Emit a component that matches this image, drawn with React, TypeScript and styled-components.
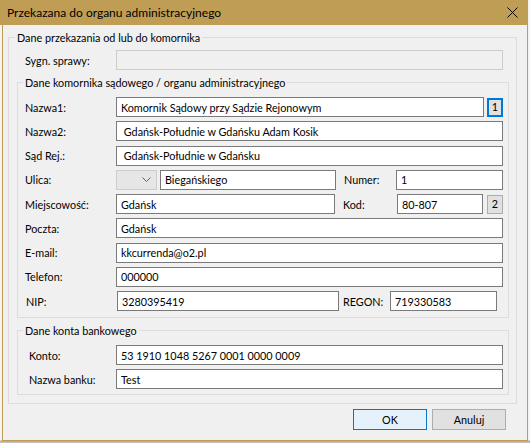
import React from 'react';
import styled, { createGlobalStyle } from 'styled-components';

const FONT = `"Lato", "Noto Sans", sans-serif`;

const Global = createGlobalStyle`
  html, body { margin: 0; padding: 0; }
  body { font-family: ${FONT}; font-size: 10.8px; color: #000; background: #ececec; }
`;

const Desktop = styled.div`
  width: 530px;
  height: 443px;
  overflow: hidden;
  background: linear-gradient(to bottom, #f4f4f4 0, #f4f4f4 440px, #a9a9a9 441px, #c8c8c8 443px);
`;

const Window = styled.div`
  margin-left: 2px;
  width: 526px;
  height: 441px;
  box-sizing: border-box;
  border: 1px solid #bf9d55;
  border-top: none;
  background: #f0f0f0;
  display: flex;
  flex-direction: column;
`;

const TitleBar = styled.div`
  height: 25px;
  margin-left: -3px;
  margin-right: -1px;
  background: #bf9d55;
  display: flex;
  align-items: center;
  justify-content: space-between;
  padding: 0 10px 0 7px;
  box-sizing: border-box;
  flex: none;
`;

const Title = styled.span`
  font-family: ${FONT};
  font-size: 12px;
  line-height: 15px;
  color: #000;
  padding-bottom: 1px;
`;

const CloseIcon = styled.svg`
  width: 11px;
  height: 11px;
  display: block;
  margin-top: -1px;
`;

const Body = styled.div`
  flex: 1;
  display: flex;
  flex-direction: column;
  padding: 5px 0 0 5px;
`;

const Group = styled.fieldset<{ $mt?: number; $pb?: number; $pt?: number }>`
  margin: ${(p) => p.$mt ?? 0}px 0 0 0;
  border: 1px solid #dcdcdc;
  padding: ${(p) => p.$pt ?? 7}px 5px ${(p) => p.$pb ?? 6}px 7px;
  min-width: 0;
  box-sizing: border-box;
`;

const OuterGroup = styled(Group)`
  width: 509px;
  padding: 0 7px 8px 8px;
`;

const Legend = styled.legend`
  padding: 0 2px;
  margin-left: -2px;
  line-height: 15px;
  font-size: 10.8px;
  color: #000;
`;

const Rows = styled.div<{ $gap: number }>`
  display: grid;
  grid-template-columns: minmax(0, 1fr);
  grid-auto-rows: 20px;
  row-gap: ${(p) => p.$gap}px;
`;

const Row = styled.div<{ $mt?: number; $pr?: number; $pl?: number }>`
  display: flex;
  align-items: center;
  height: 20px;
  min-width: 0;
  margin-top: ${(p) => p.$mt ?? 0}px;
  padding: 0 ${(p) => p.$pr ?? 0}px 0 ${(p) => p.$pl ?? 0}px;
`;

const Label = styled.span<{ $indent?: number }>`
  flex: none;
  width: 91px;
  box-sizing: border-box;
  padding-left: ${(p) => p.$indent ?? 0}px;
  white-space: nowrap;
  line-height: 14px;
  padding-top: 1px;
`;

const SubLabel = styled.span<{ $w: number; $ml: number }>`
  flex: none;
  width: ${(p) => p.$w}px;
  margin-left: ${(p) => p.$ml}px;
  white-space: nowrap;
  line-height: 14px;
  padding-top: 1px;
`;

const TextBox = styled.input<{ $w?: number; $ml?: number }>`
  ${(p) => (p.$w ? `width: ${p.$w}px; flex: none;` : 'flex: 1 1 0; width: 0; min-width: 0;')}
  margin: 0 0 0 ${(p) => p.$ml ?? 0}px;
  height: 20px;
  box-sizing: border-box;
  border: 1px solid #7a7a7a;
  background: #fff;
  padding: 0 4px;
  font-family: ${FONT};
  font-size: 10.8px;
  color: #000;
  outline: none;
  white-space: pre;

  &:disabled {
    background: #f0f0f0;
    border-color: #cccccc;
  }
`;

const Combo = styled.div`
  flex: none;
  width: 41px;
  height: 20px;
  margin-right: 3px;
  box-sizing: border-box;
  border: 1px solid #cccccc;
  background: #e6e6e6;
  display: flex;
  align-items: center;
  justify-content: flex-end;
  padding-right: 5px;
`;

const Chevron = styled.svg`
  width: 9px;
  height: 5px;
  display: block;
`;

const SmallButton = styled.button<{ $focused?: boolean; $ml: number }>`
  flex: none;
  width: 16px;
  height: 19px;
  margin: 0 0 0 ${(p) => p.$ml}px;
  padding: 0;
  box-sizing: border-box;
  border: ${(p) => (p.$focused ? '2px solid #0078d7' : '1px solid #adadad')};
  background: #e1e1e1;
  font-family: ${FONT};
  font-size: 10.8px;
  line-height: 14px;
  color: #000;
  display: flex;
  align-items: center;
  justify-content: center;
`;

const Footer = styled.div`
  display: flex;
  justify-content: flex-end;
  gap: 5px;
  margin-top: 5px;
  padding-right: 21px;
`;

const DialogButton = styled.button<{ $default?: boolean }>`
  width: 74px;
  height: 21px;
  margin: 0;
  padding: 0;
  box-sizing: border-box;
  border: 1px solid ${(p) => (p.$default ? '#0078d7' : '#adadad')};
  background: ${(p) => (p.$default ? '#e5f1fb' : '#e1e1e1')};
  font-family: ${FONT};
  font-size: 10.8px;
  color: #000;
`;

export default function App() {
  return (
    <>
      <Global />
      <Desktop>
        <Window>
          <TitleBar>
            <Title>Przekazana do organu administracyjnego</Title>
            <CloseIcon viewBox="0 0 11 11">
              <path d="M0.5 0.5 L10.5 10.5 M10.5 0.5 L0.5 10.5" stroke="#000" strokeWidth="1" fill="none" />
            </CloseIcon>
          </TitleBar>
          <Body>
            <OuterGroup>
              <Legend>Dane przekazania od lub do komornika</Legend>
              <Row $mt={5} $pl={8} $pr={6}>
                <Label>Sygn. sprawy:</Label>
                <TextBox disabled value="" readOnly />
              </Row>

              <Group $mt={5}>
                <Legend>Dane komornika sądowego / organu administracyjnego</Legend>
                <Rows $gap={4.25}>
                  <Row>
                    <Label>Nazwa1:</Label>
                    <TextBox readOnly value="Komornik Sądowy przy Sądzie Rejonowym" />
                    <SmallButton $focused $ml={3}>1</SmallButton>
                  </Row>
                  <Row>
                    <Label>Nazwa2:</Label>
                    <TextBox readOnly value=" Gdańsk-Południe w Gdańsku Adam Kosik" />
                  </Row>
                  <Row>
                    <Label>Sąd Rej.:</Label>
                    <TextBox readOnly value=" Gdańsk-Południe w Gdańsku" />
                  </Row>
                  <Row>
                    <Label>Ulica:</Label>
                    <Combo>
                      <Chevron viewBox="0 0 9 5">
                        <path d="M0.5 0.5 L4.5 4.5 L8.5 0.5" stroke="#606060" strokeWidth="1" fill="none" />
                      </Chevron>
                    </Combo>
                    <TextBox $w={176} readOnly value="Biegańskiego" />
                    <SubLabel $w={52} $ml={8}>Numer:</SubLabel>
                    <TextBox readOnly value="1" />
                  </Row>
                  <Row>
                    <Label>Miejscowość:</Label>
                    <TextBox $w={219} readOnly value="Gdańsk" />
                    <SubLabel $w={54} $ml={8}>Kod:</SubLabel>
                    <TextBox $w={86} readOnly value="80-807" />
                    <SmallButton $ml={4}>2</SmallButton>
                  </Row>
                  <Row>
                    <Label>Poczta:</Label>
                    <TextBox readOnly value="Gdańsk" />
                  </Row>
                  <Row>
                    <Label>E-mail:</Label>
                    <TextBox readOnly value="kkcurrenda@o2.pl" />
                  </Row>
                  <Row>
                    <Label>Telefon:</Label>
                    <TextBox readOnly value="000000" />
                  </Row>
                  <Row>
                    <Label $indent={1}>NIP:</Label>
                    <TextBox $w={222} $ml={1} readOnly value="3280395419" />
                    <SubLabel $w={47} $ml={4}>REGON:</SubLabel>
                    <TextBox $w={107} readOnly value="719330583" />
                  </Row>
                </Rows>
              </Group>

              <Group $mt={5} $pb={5}>
                <Legend>Dane konta bankowego</Legend>
                <Rows $gap={4}>
                  <Row>
                    <Label $indent={4}>Konto:</Label>
                    <TextBox readOnly value="53 1910 1048 5267 0001 0000 0009" />
                  </Row>
                  <Row>
                    <Label $indent={4}>Nazwa banku:</Label>
                    <TextBox readOnly value="Test" />
                  </Row>
                </Rows>
              </Group>
            </OuterGroup>

            <Footer>
              <DialogButton $default>OK</DialogButton>
              <DialogButton>Anuluj</DialogButton>
            </Footer>
          </Body>
        </Window>
      </Desktop>
    </>
  );
}
